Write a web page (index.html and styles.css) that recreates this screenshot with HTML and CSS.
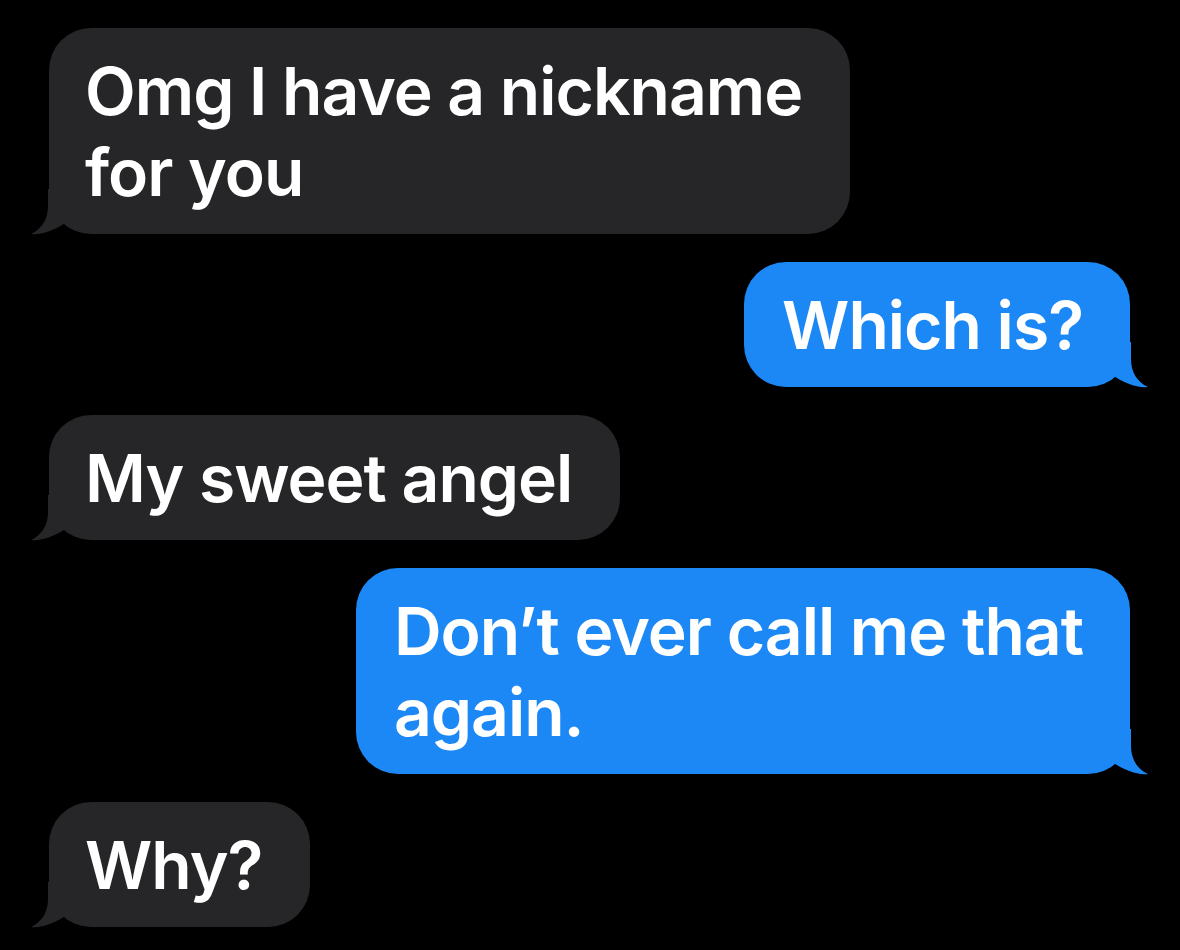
FILE: index.html
```html
<!DOCTYPE html>
<html lang="en">
<head>
<meta charset="utf-8">
<title>Messages</title>
<link rel="stylesheet" href="styles.css">
</head>
<body>
<main class="thread">
  <div class="row row--in">
    <div class="bubble bubble--in">Omg I have a nickname<br>for you
      <svg class="tail" viewBox="0 0 48 46" width="48" height="46" aria-hidden="true"><path d="M31 0 L31 17 C31 30 37 40 48 45 C38 46.5 24 41 12 33 L12 0 Z"/></svg>
    </div>
  </div>
  <div class="row row--out">
    <div class="bubble bubble--out">Which is?
      <svg class="tail" viewBox="0 0 48 46" width="48" height="46" aria-hidden="true"><path d="M31 0 L31 17 C31 30 37 40 48 45 C38 46.5 24 41 12 33 L12 0 Z"/></svg>
    </div>
  </div>
  <div class="row row--in">
    <div class="bubble bubble--in">My sweet angel
      <svg class="tail" viewBox="0 0 48 46" width="48" height="46" aria-hidden="true"><path d="M31 0 L31 17 C31 30 37 40 48 45 C38 46.5 24 41 12 33 L12 0 Z"/></svg>
    </div>
  </div>
  <div class="row row--out">
    <div class="bubble bubble--out">Don’t ever call me that<br>again.
      <svg class="tail" viewBox="0 0 48 46" width="48" height="46" aria-hidden="true"><path d="M31 0 L31 17 C31 30 37 40 48 45 C38 46.5 24 41 12 33 L12 0 Z"/></svg>
    </div>
  </div>
  <div class="row row--in">
    <div class="bubble bubble--in">Why?
      <svg class="tail" viewBox="0 0 48 46" width="48" height="46" aria-hidden="true"><path d="M31 0 L31 17 C31 30 37 40 48 45 C38 46.5 24 41 12 33 L12 0 Z"/></svg>
    </div>
  </div>
</main>
</body>
</html>
```

FILE: styles.css
```css
html, body {
  margin: 0;
  padding: 0;
  background: #000;
}

body {
  width: 1180px;
  height: 950px;
  overflow: hidden;
  font-family: "Inter", "Liberation Sans", sans-serif;
}

.thread {
  display: flex;
  flex-direction: column;
  gap: 28px;
  padding: 28px 50px 0 49px;
}

.row {
  display: flex;
}

.row--in {
  justify-content: flex-start;
}

.row--out {
  justify-content: flex-end;
}

.bubble {
  position: relative;
  box-sizing: border-box;
  padding: 23px 48px 21px 36px;
  border-radius: 42px;
  color: #fff;
  font-size: 66px;
  font-weight: 600;
  line-height: 81px;
  letter-spacing: -1px;
  white-space: nowrap;
}

.bubble--in {
  background: #262628;
}

.bubble--out {
  background: #1c88f6;
  padding: 23px 47px 21px 38px;
}

.tail {
  position: absolute;
  bottom: -1px;
  display: block;
}

.bubble--out .tail {
  right: -18px;
  fill: #1c88f6;
}

.bubble--in .tail {
  left: -18px;
  fill: #262628;
  transform: scaleX(-1);
}
```
